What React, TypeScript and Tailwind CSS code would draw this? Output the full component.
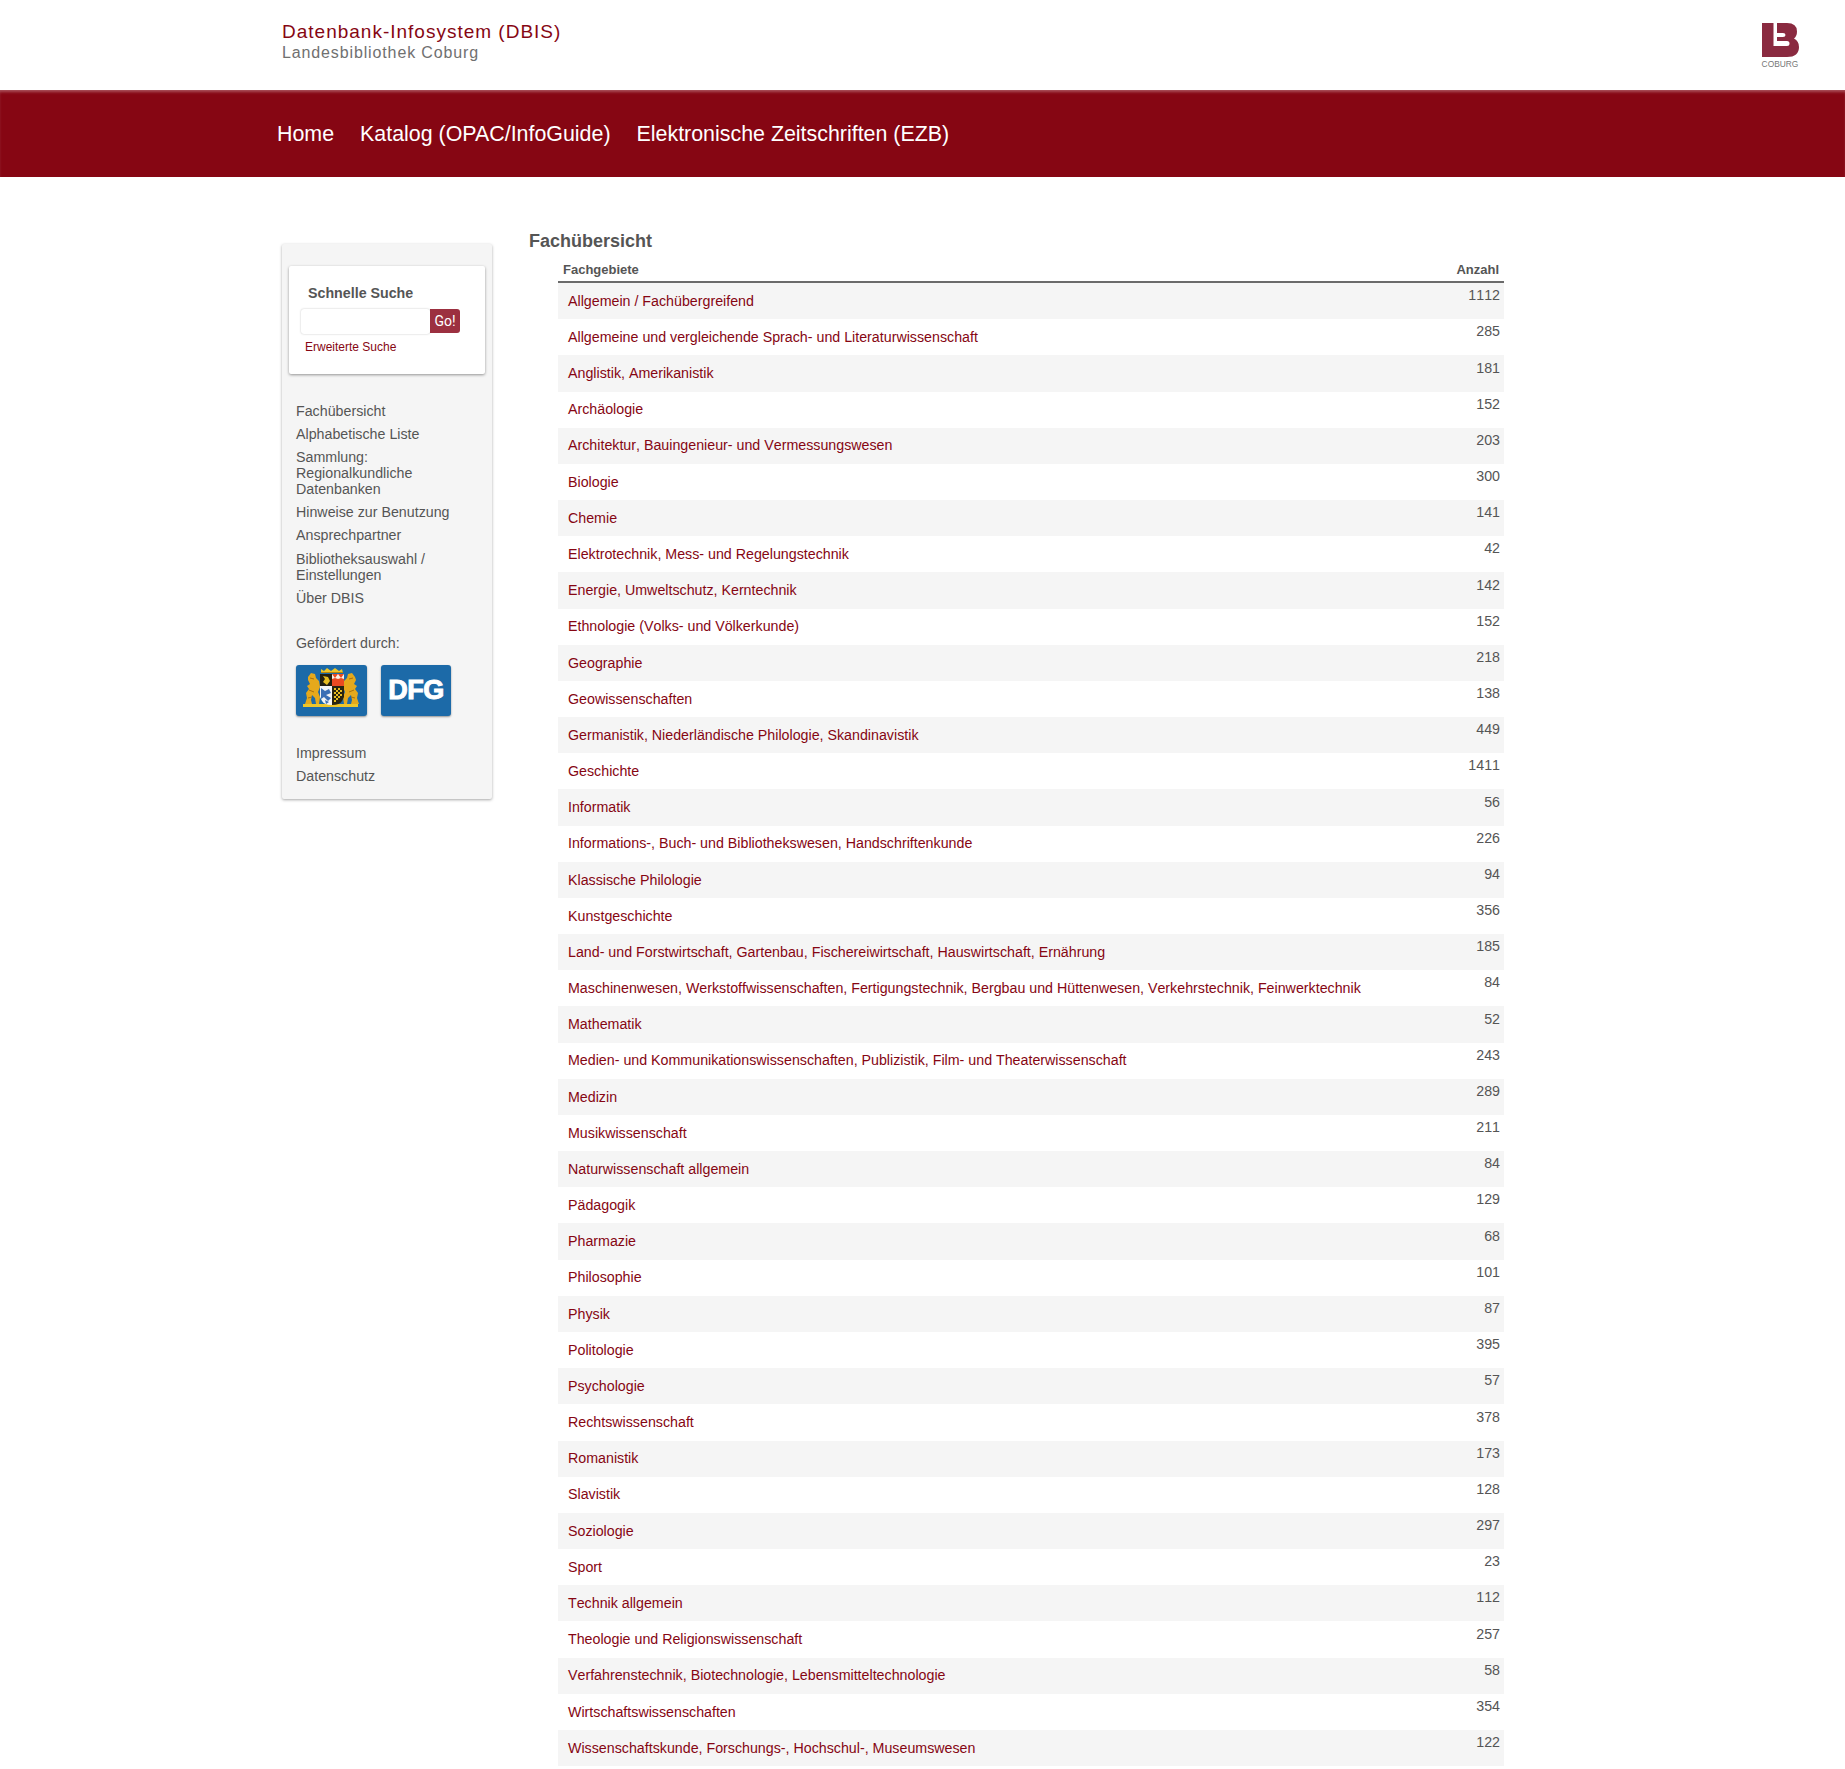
const rows: [string, number][] = [
  ["Allgemein / Fachübergreifend", 1112],
  ["Allgemeine und vergleichende Sprach- und Literaturwissenschaft", 285],
  ["Anglistik, Amerikanistik", 181],
  ["Archäologie", 152],
  ["Architektur, Bauingenieur- und Vermessungswesen", 203],
  ["Biologie", 300],
  ["Chemie", 141],
  ["Elektrotechnik, Mess- und Regelungstechnik", 42],
  ["Energie, Umweltschutz, Kerntechnik", 142],
  ["Ethnologie (Volks- und Völkerkunde)", 152],
  ["Geographie", 218],
  ["Geowissenschaften", 138],
  ["Germanistik, Niederländische Philologie, Skandinavistik", 449],
  ["Geschichte", 1411],
  ["Informatik", 56],
  ["Informations-, Buch- und Bibliothekswesen, Handschriftenkunde", 226],
  ["Klassische Philologie", 94],
  ["Kunstgeschichte", 356],
  ["Land- und Forstwirtschaft, Gartenbau, Fischereiwirtschaft, Hauswirtschaft, Ernährung", 185],
  ["Maschinenwesen, Werkstoffwissenschaften, Fertigungstechnik, Bergbau und Hüttenwesen, Verkehrstechnik, Feinwerktechnik", 84],
  ["Mathematik", 52],
  ["Medien- und Kommunikationswissenschaften, Publizistik, Film- und Theaterwissenschaft", 243],
  ["Medizin", 289],
  ["Musikwissenschaft", 211],
  ["Naturwissenschaft allgemein", 84],
  ["Pädagogik", 129],
  ["Pharmazie", 68],
  ["Philosophie", 101],
  ["Physik", 87],
  ["Politologie", 395],
  ["Psychologie", 57],
  ["Rechtswissenschaft", 378],
  ["Romanistik", 173],
  ["Slavistik", 128],
  ["Soziologie", 297],
  ["Sport", 23],
  ["Technik allgemein", 112],
  ["Theologie und Religionswissenschaft", 257],
  ["Verfahrenstechnik, Biotechnologie, Lebensmitteltechnologie", 58],
  ["Wirtschaftswissenschaften", 354],
  ["Wissenschaftskunde, Forschungs-, Hochschul-, Museumswesen", 122],
];

const CoatOfArms = () => (
  <svg viewBox="0 0 71 51" className="w-[71px] h-[51px]">
    <rect x="7" y="39" width="55" height="3" fill="#eec62a" />
    {/* lions */}
    <path d="M12 12l3-4 4 1 1 4 3 3 1 6-2 5 2 5-1 7h-3l-1-6-3-3-1 5 1 4H9l2-6-1-5 3-4-2-3 3-2-2-4z" fill="#e5a91c" />
    <path d="M59 12l-3-4-4 1-1 4-3 3-1 6 2 5-2 5 1 7h3l1-6 3-3 1 5-1 4h8l-2-6 1-5-3-4 2-3-3-2 2-4z" fill="#e5a91c" />
    <path d="M14 13l4 1M57 13l-4 1M13 25l5 2M58 25l-5 2M12 33l4-1M59 33l-4-1" stroke="#a8700e" strokeWidth="1" fill="none" />
    {/* crown */}
    <path d="M25 8V4l3 2 3-3 4 3 4-3 4 3 3-2 1 4z" fill="#eec62a" />
    <path d="M25 7.5h22" stroke="#b8860b" strokeWidth="1" />
    {/* shield */}
    <path d="M24 9h12v12H24z" fill="#24200f" />
    <path d="M27 11l5 1 2 4-3 4-4-3 2-3z" fill="#e6bb1f" />
    <path d="M36 9h12v12H36z" fill="#ea4a22" />
    <path d="M36 9l3 4 3-4 3 4 3-4v5l-3-1-3 1-3-1-3 1z" fill="#f6f0e8" />
    <path d="M24 21h12v19q-8 0-10-4l-2-4z" fill="#f4f4f4" />
    <path d="M25 23l4 3 4-2 2 4-5 2 5 3-3 3-4-4-3 2zM29 35l4 2-3 2z" fill="#3b6fb5" />
    <path d="M36 21h12v11l-2 4q-2 4-10 4z" fill="#29240f" />
    <path d="M38 23h2v2h-2zM42 23h2v2h-2zM40 25h2v2h-2zM44 25h2v2h-2zM38 27h2v2h-2zM42 27h2v2h-2zM40 29h2v2h-2zM44 29h2v2h-2zM38 31h2v2h-2zM42 31h2v2h-2zM40 33h2v2h-2zM38 35h2v2h-2z" fill="#e6bb1f" />
  </svg>
);

const CoburgLogo = () => (
  <div className="flex flex-col items-center w-[38px]">
    <svg viewBox="0 0 37 34" className="w-[37px] h-[34px]">
      <path d="M0 0H11.5V23H25Q27.5 23 27.5 20.5Q27.5 18 25 18H15V14H21Q23.5 14 23.5 12Q23.5 10 21 10H15V0H25Q35 0 35 8.5Q35 13 32 15.5Q37 18 37 24Q37 34 25 34H0Z" fill="#8a2a40" />
    </svg>
    <span className="text-[8.4px] leading-[8px] mt-[3px] text-[#777] whitespace-nowrap">COBURG</span>
  </div>
);

export default function App() {
  return (
    <div className="min-h-[1769px] bg-white font-['Liberation_Sans',Arial,sans-serif] [font-kerning:none] text-[14.24px] text-[#555]">
      <header className="h-[90px] flex justify-between pl-[282px] pr-[46px] pt-[21px]">
        <div>
          <div className="text-[19px] leading-[21px] tracking-[1px] text-[#860613]">Datenbank-Infosystem (DBIS)</div>
          <div className="text-[16px] leading-[18px] mt-[2px] tracking-[0.87px] text-[#707070]">Landesbibliothek Coburg</div>
        </div>
        <div className="pt-[2px]"><CoburgLogo /></div>
      </header>

      <nav className="h-[87px] bg-[#860613] flex items-center pl-[264px] pt-[2px] text-[21.4px] [font-kerning:normal] text-white shadow-[inset_0_3px_3px_-1px_rgba(255,255,255,0.3)]">
        <a className="px-[13px]">Home</a>
        <a className="px-[13px]">Katalog (OPAC/InfoGuide)</a>
        <a className="px-[13px]">Elektronische Zeitschriften (EZB)</a>
      </nav>

      <main className="flex items-start pl-[282px] pt-[50px]">
        <aside className="w-[210px] h-[555px] mt-[17px] bg-[#f5f5f5] rounded-[2px] shadow-[0_1px_3px_rgba(0,0,0,0.35)] px-[7px] pt-[22px]">
          <div className="h-[108px] bg-white rounded-[2px] shadow-[0_1px_3px_rgba(0,0,0,0.4)] pt-[19px]">
            <div className="pl-[19px] font-bold text-[14.24px] leading-[17px]">Schnelle Suche</div>
            <div className="flex ml-[12px] mt-[7px]">
              <input className="w-[129px] h-[25px] bg-white rounded-[3px] shadow-[0_0_2px_rgba(0,0,0,0.25)]" />
              <button className="w-[30px] h-[24px] bg-[#9c3040] text-white rounded-r-[3px] text-[14px] font-['Roboto',sans-serif]">Go!</button>
            </div>
            <a className="block pl-[16px] mt-[6px] text-[12px] leading-[14px] text-[#860613]">Erweiterte Suche</a>
          </div>
          <ul className="mt-[29px] pl-[7px] pr-[20px] leading-[16px] flex flex-col gap-[7px]">
            <li>Fachübersicht</li>
            <li>Alphabetische Liste</li>
            <li>Sammlung: Regionalkundliche Datenbanken</li>
            <li>Hinweise zur Benutzung</li>
            <li>Ansprechpartner</li>
            <li className="mt-[1px]">Bibliotheksauswahl / Einstellungen</li>
            <li>Über DBIS</li>
          </ul>
          <div className="mt-[29px] pl-[7px] leading-[16px]">Gefördert durch:</div>
          <div className="flex gap-[14px] pl-[7px] mt-[14px]">
            <div className="w-[71px] h-[51px] bg-[#1c6aa8] rounded-[3px] shadow-[0_1px_2px_rgba(0,0,0,0.4)]"><CoatOfArms /></div>
            <div className="w-[70px] h-[51px] bg-[#1c6aa8] rounded-[3px] shadow-[0_1px_2px_rgba(0,0,0,0.4)] flex items-center justify-center text-white font-bold text-[27px] tracking-[-0.5px] [-webkit-text-stroke:1px_white]">DFG</div>
          </div>
          <div className="mt-[29px] pl-[7px] leading-[16px] flex flex-col gap-[7px]">
            <div>Impressum</div>
            <div>Datenschutz</div>
          </div>
        </aside>

        <section className="ml-[37px] w-[975px]">
          <h1 className="font-bold text-[18px] leading-[26px] pt-[1px]">Fachübersicht</h1>
          <div className="ml-[29px] w-[946px] mt-[2px]">
            <div className="flex justify-between h-[27px] px-[5px] pt-[6px] font-bold text-[13px] leading-[15px] border-b-2 border-[#6b6b6b]">
              <span>Fachgebiete</span>
              <span>Anzahl</span>
            </div>
            {rows.map(([name, count]) => (
              <div key={name} className="flex justify-between h-[36.18px] even:bg-[#f5f5f5] pl-[10px] pr-[4px]">
                <a className="pt-[9.8px] leading-[16px] text-[#860613]">{name}</a>
                <span className="pt-[4.2px] leading-[16px]">{count}</span>
              </div>
            ))}
          </div>
        </section>
      </main>
    </div>
  );
}
